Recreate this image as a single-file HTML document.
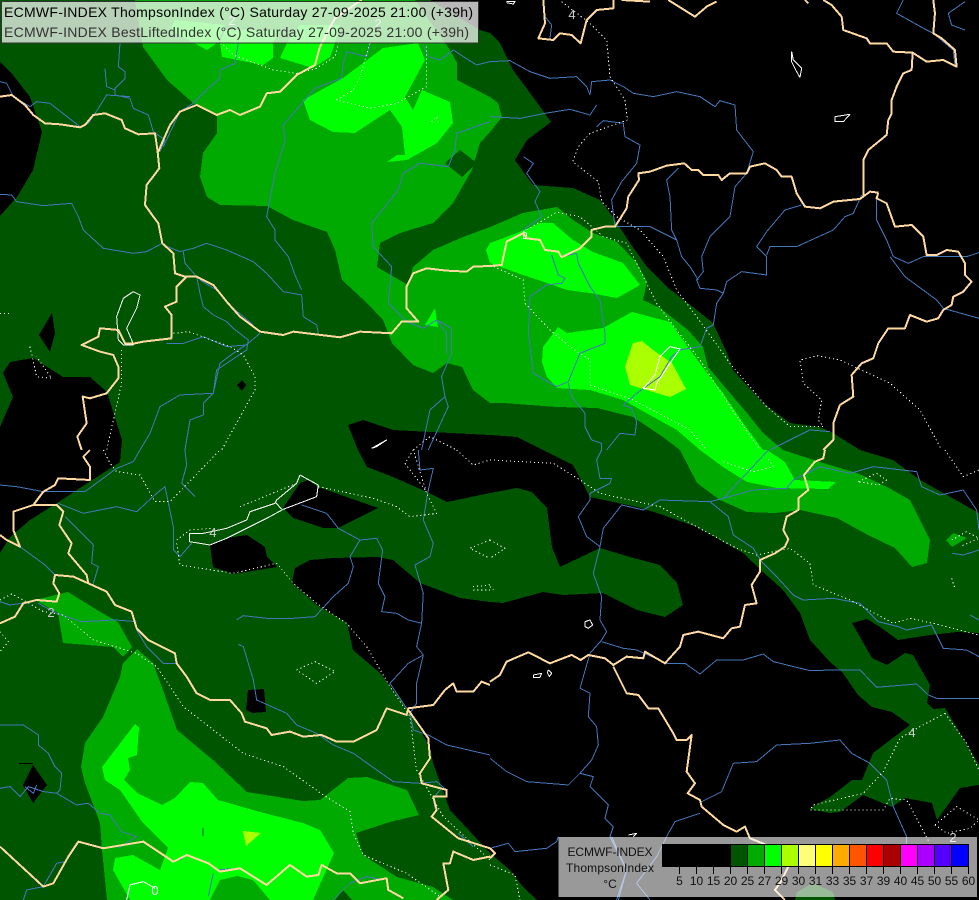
<!DOCTYPE html>
<html><head><meta charset="utf-8"><style>
html,body{margin:0;padding:0;background:#000;width:979px;height:900px;overflow:hidden}
svg{display:block;font-family:"Liberation Sans",sans-serif}
.r polyline,.b polyline,.d polyline,.l polyline{fill:none;vector-effect:non-scaling-stroke;stroke-linejoin:round;shape-rendering:crispEdges}
.r polyline{stroke:#4477bb;stroke-width:1}
.b polyline{stroke:#ffd9a0;stroke-width:2}
.d polyline{stroke:#fff;stroke-width:1;stroke-dasharray:1.2 2.8}
.l polyline{stroke:#fff;stroke-width:1}
</style></head><body>
<svg xmlns="http://www.w3.org/2000/svg" width="979" height="900" viewBox="0 0 979 900">
<rect width="979" height="900" fill="#005500"/>
<g shape-rendering="crispEdges">
<g fill="#000">
<polygon points="430,0 480,30 490,33 500,43 513,70 533,97 551,122 527,140 515,160 527,177 533,185 573,188 600,200 613,217 630,243 647,267 667,287 693,307 713,323 727,353 733,370 763,403 790,423 820,427 833,433 860,450 893,460 920,480 979,513 979,0"/>
<polygon points="348,425 363,420 393,430 490,435 517,437 543,450 573,465 590,497 637,507 657,513 697,527 743,553 763,572 783,590 800,613 810,640 830,662 843,673 858,695 872,707 892,712 910,725 873,753 862,780 852,780 830,797 809,809 830,813 840,812 863,795 892,807 905,798 932,803 937,820 960,788 979,785 979,900 537,900 523,887 510,870 490,853 450,810 433,763 430,747 407,708 380,673 353,650 347,623 317,605 292,583 295,568 310,560 333,558 377,557 393,560 420,583 460,598 490,602 503,603 543,592 563,595 603,593 637,610 665,617 683,605 677,583 660,565 630,557 600,548 560,567 552,547 547,508 532,492 517,488 490,493 447,502 427,492 393,477 367,467 358,450"/>
<polygon points="852,623 867,619 880,627 898,640 930,635 957,632 979,633 979,765 945,708 933,709 927,703 930,685 913,655 905,653 887,665 872,658"/>
<polygon points="0,62 13,75 30,97 42,132 33,170 17,197 0,216"/>
<polygon points="3,373 10,362 33,358 63,377 90,377 107,392 122,440 120,462 57,503 30,520 10,537 0,553 0,427 13,397"/>
<polygon points="52,313 55,333 50,352 39,335"/>
<polygon points="242,380 246,385 242,391 237,385"/>
<polygon points="283,508 300,483 308,480 318,487 378,508 338,528 323,528 293,518"/>
<polygon points="210,545 227,538 247,535 265,547 267,557 277,567 233,574 213,567"/>
<polygon points="248,690 264,689 266,712 253,713 246,710"/>
<polygon points="33,765 47,785 33,803 23,785"/>
<rect x="19" y="763" width="14" height="1"/>
</g>
<polygon fill="#005500" points="797,892 813,883 833,892 835,900 795,900"/>
<g fill="#00aa00">
<polygon points="135,0 415,0 450,50 457,63 457,80 490,97 498,103 502,117 490,132 480,143 472,170 453,203 433,223 400,233 380,243 377,267 408,285 413,267 433,250 463,237 490,227 523,213 557,207 573,220 593,233 617,242 637,263 647,282 643,300 660,308 688,330 703,347 708,367 730,393 747,413 763,433 783,450 823,463 857,473 887,487 910,500 930,540 927,563 912,567 895,548 868,535 837,518 800,510 775,513 747,512 720,500 697,483 680,450 663,437 633,417 597,408 557,407 503,403 490,403 473,390 462,367 447,363 433,373 413,365 392,343 383,320 367,303 342,280 335,250 327,232 293,220 267,206 220,205 207,197 200,177 203,153 217,133 217,115 193,103 167,80 143,47"/>
<polygon points="35,600 68,592 97,610 118,622 132,647 123,657 113,647 63,643 58,613"/>
<polygon points="137,649 153,663 163,690 177,730 213,760 247,792 303,801 320,800 348,778 367,777 407,790 419,815 390,822 356,833 363,855 397,877 433,887 453,900 107,900 102,850 100,823 85,783 81,767 85,743 103,717 120,677 123,663"/>
<polygon points="946,540 953,533 967,538 952,547"/>
</g>
<polygon fill="#005500" points="460,150 477,163 462,177 445,163"/>
<polygon fill="#005500" points="343,890 352,900 335,900"/>
<g fill="#00ff00">
<polygon points="170,30 207,50 217,43 225,25 175,20"/>
<polygon points="220,43 222,57 263,65 273,58 273,43 280,30 225,30"/>
<polygon points="287,43 280,58 313,68 330,57 335,43 340,25 300,25"/>
<polygon points="303,100 343,78 383,48 418,43 425,60 405,97 413,110 422,90 450,102 453,123 437,143 407,160 387,162 397,155 405,155 402,127 390,110 355,133 333,132 310,120"/>
<polygon points="435,308 438,327 425,325"/>
<polygon points="490,243 517,233 540,223 553,223 573,240 593,252 623,263 640,285 617,298 590,293 567,290 547,283 523,275 490,263 486,250"/>
<polygon points="543,347 558,327 567,333 603,328 632,312 670,322 688,347 707,373 723,393 743,423 763,450 767,450 785,462 795,480 836,482 828,489 777,488 747,482 723,467 700,450 677,430 623,400 590,390 557,388 547,377 542,362"/>
<polygon points="135,724 139,728 137,755 128,758 130,770 124,780 137,793 162,805 175,798 190,782 203,783 218,800 260,812 303,823 320,830 334,853 313,900 270,900 253,880 237,876 220,880 210,900 130,900 113,870 115,858 133,855 160,870 168,848 143,823 120,790 105,780 102,767"/>
</g>
<g fill="#aaff00">
<polygon points="633,343 642,341 653,350 672,363 686,389 670,397 653,392 630,385 625,367"/>
<polygon points="243,831 261,833 246,846"/>
</g>
<rect x="202" y="828" width="2" height="8" fill="#00aa00"/>
</g>

<!-- rivers -->
<g class="r">
<g transform="scale(.3333)">
<polyline points="360,130 355,200 375,215 375,235 345,265 345,285 390,295 400,325 445,345 460,395 495,420 480,455"/>
<polyline points="315,205 320,260 345,270"/>
<polyline points="0,245 20,250 40,290 90,320 110,305 150,310 240,380 265,370 295,325 320,285 390,290"/>
<polyline points="0,583 35,585 50,605 130,617 215,610 235,650 250,690 310,745 400,760 440,755 487,730"/>
<polyline points="490,735 540,755 580,745 620,730 680,750 760,785 800,820 850,875 905,885 910,950 950,975 955,1000"/>
<polyline points="550,755 555,790 590,830 600,880 610,920 640,945 680,965 700,985 745,1020 740,1050 650,1110 640,1180 610,1210 610,1245 570,1260 555,1350"/>
<polyline points="780,1000 745,1030 700,1060 660,1090 640,1180 540,1185 480,1220 450,1300 420,1350"/>
<polyline points="500,1030 550,1030 610,1010 680,1040 740,1035"/>
<polyline points="600,840 650,870 700,925 760,975"/>
<polyline points="715,130 705,190 660,210 660,235 625,265 580,310 540,335 490,440"/>
<polyline points="1110,130 1100,170 1040,155 1030,190 1025,235 945,265 850,375 855,420 825,520 800,650 825,690 825,720 865,770 885,825 905,870"/>
<polyline points="1470,365 1370,400 1365,450 1345,500 1260,490 1210,520 1195,570 1115,670 1120,740 1175,800 1165,910 1220,965 1270,985 1310,960 1355,985 1355,1060 1325,1130 1335,1190 1290,1230 1265,1350"/>
<polyline points="1270,135 1285,170 1320,180 1360,150 1390,170 1430,195 1470,185"/>
<polyline points="1310,960 1340,1000 1340,1060"/>
<polyline points="1335,1190 1345,1220 1285,1350"/>
</g>
<g transform="translate(490,0) scale(.3333)">
<polyline points="0,185 60,182 120,215 180,235 260,230 290,260 300,285"/>
<polyline points="0,350 90,355 165,340 240,328 300,345 320,315"/>
<polyline points="300,285 305,245 360,240 400,260 430,280 490,290 560,275 630,290 675,320 690,302 735,315 740,390 790,455 770,520 735,560 720,650 660,710 635,770 640,815 620,840 630,865 680,870 700,880 710,845 755,815 830,825 830,770 800,740 830,695 885,630 935,615"/>
<polyline points="830,765 840,740 920,740 1030,690 1065,650 1090,640 1115,585"/>
<polyline points="320,380 340,362 400,370 405,410 450,435 440,490 395,545 365,600 375,680"/>
<polyline points="375,680 480,680 560,720 575,770 600,800 625,840"/>
<polyline points="100,470 130,490 110,520 150,575 135,605 155,650 100,690"/>
<polyline points="565,505 530,540 540,590 545,690 560,720"/>
<polyline points="185,765 205,825 225,835 215,850 170,855 120,890 115,1000 130,1120 200,1160 235,1145 270,1060 345,1030 345,1000 330,900 300,860 265,790 260,760 215,770"/>
<polyline points="235,1150 245,1190 285,1240 285,1280 305,1320 335,1330 335,1350"/>
<polyline points="350,1350 390,1300 435,1305 440,1265 425,1225 400,1215 440,1180 510,1130 545,1070 570,1050 630,1040 650,985 670,975 680,910 700,880"/>
<polyline points="840,1350 880,1330 960,1290 1020,1295"/>
<polyline points="1160,590 1160,660 1190,720 1210,770 1255,790 1300,770 1430,770 1467,758"/>
<polyline points="1200,770 1245,830 1340,900 1360,925 1467,955"/>
<polyline points="1240,0 1220,40 1310,90 1330,100 1390,150 1395,195"/>
<polyline points="1425,90 1385,75 1375,40 1425,5"/>
<polyline points="160,0 165,50 185,75 180,115"/>
</g>
<g transform="translate(0,450) scale(.3333)">
<polyline points="420,0 400,35 350,55 255,125 130,125 50,110 0,105"/>
<polyline points="175,160 250,190 350,170 410,185 470,130 495,110 520,230 520,300 540,320 575,280"/>
<polyline points="555,0 560,45 545,100 585,140"/>
<polyline points="195,200 280,285 275,340 295,350 280,400"/>
<polyline points="60,290 135,345 165,375"/>
<polyline points="115,460 170,490 245,515 345,510 410,515"/>
<polyline points="0,455 30,465 100,455"/>
<polyline points="410,540 440,590 490,640 530,640"/>
<polyline points="710,510 730,497 800,505 880,505 945,500 1000,440 1045,400 1060,350 1050,320 1080,270 1130,265 1148,300 1135,400 1155,440 1145,485 1190,490 1225,510 1265,520 1250,590 1270,615 1225,640 1170,700 1220,775"/>
<polyline points="905,165 980,190 1015,235 1080,270"/>
<polyline points="1255,0 1260,60 1300,55 1285,120 1270,210 1300,280 1290,320 1245,345 1270,430 1265,520"/>
<polyline points="1270,615 1250,700 1250,760 1230,790 1240,840 1285,855 1340,885 1470,915"/>
<polyline points="715,583 730,590 760,690 770,750 860,790 890,825 950,850 1000,885 1060,910 1130,960 1180,995 1260,1000 1310,995 1340,1020"/>
<polyline points="0,1015 30,1010 60,1040 85,1010 130,1025 170,1030 230,1065 265,1060 300,1090 330,1095 365,1145 410,1160 355,1195"/>
<polyline points="0,825 70,825 115,855 115,885 145,910 165,950 185,970 180,1020 170,1030"/>
<polyline points="75,1010 100,1030 110,1005"/>
<polyline points="70,1350 80,1320 130,1310 170,1240 195,1235"/>
<polyline points="640,1270 625,1340"/>
<polyline points="650,1260 720,1255"/>
<polyline points="1000,1350 1050,1300 1100,1280 1150,1290"/>
<polyline points="540,1230 560,1215"/>
<polyline points="1320,1020 1300,1045 1305,1075"/>
<polyline points="1420,1190 1375,1150"/>
</g>
<g transform="translate(490,450) scale(.3333)">
<polyline points="335,0 320,30 330,85 365,85 360,100 300,130 300,150 265,200 290,260 330,290 310,370 335,440 330,510 350,545 335,570 300,610 270,715 300,730 295,800 320,830 325,885 305,930 270,970 310,980 300,1010 355,1065 345,1105 370,1130 360,1160 410,1260 380,1350"/>
<polyline points="395,165 340,235 330,290"/>
<polyline points="335,575 400,595 440,600 530,640 585,640 630,672 680,630 760,630 820,612 850,635 960,662 1030,660 1110,660 1160,712 1280,702 1315,735 1340,745 1467,745"/>
<polyline points="270,970 235,1005 110,995 50,965 0,925"/>
<polyline points="395,165 460,180 510,150 660,155 700,145 835,0"/>
<polyline points="660,155 715,200 730,255 790,295 815,335 860,380 910,435 940,450 1030,445 1110,460 1165,515 1225,530 1250,540 1325,525 1360,595 1430,600 1467,620"/>
<polyline points="700,145 790,120 890,115 910,90 990,50 1080,70 1150,50 1280,65 1295,110 1350,135 1420,120 1460,180 1467,240"/>
<polyline points="1387,310 1420,315 1467,300"/>
<polyline points="1440,495 1467,510"/>
<polyline points="0,1195 55,1180 75,1205 170,1195 200,1175 205,1160"/>
<polyline points="635,1055 695,1025 730,940 800,935 860,885 960,880 1050,870 1085,910 1140,940 1190,990 1210,1070 1250,1160 1250,1190"/>
<polyline points="630,1090 555,1115 535,1150 500,1220 440,1300 480,1350"/>
<polyline points="365,1160 410,1260 385,1350"/>
</g>
</g>

<!-- dotted contours -->
<g class="d">
<g transform="scale(.3333)">
<polyline points="670,135 700,165 820,210 890,220 950,205 1005,170 1015,130"/>
<polyline points="1110,130 1080,230 1060,270 1010,300 1110,325 1190,310 1280,260 1280,130"/>
<polyline points="520,1000 565,995 620,1015 690,1040 730,1065 765,1130 765,1170 665,1350"/>
<polyline points="365,1050 365,1150 320,1350"/>
<polyline points="90,1040 110,1130 155,1135 110,1070"/>
<polyline points="0,940 30,940"/>
<polyline points="1295,365 1310,350 1315,370"/>
<polyline points="1240,1350 1290,1310 1370,1350"/>
</g>
<g transform="translate(490,0) scale(.3333)">
<polyline points="215,5 300,70 350,120 360,230 405,300 413,360 300,400 265,440 248,485 325,545 335,605 380,650 450,690 520,770 560,870 620,950 720,1090 830,1220 900,1280 1000,1280 985,1260 995,1200 940,1150 930,1080 980,1067 1050,1080 1200,1150 1290,1230 1355,1350"/>
<polyline points="100,695 200,637 270,650 340,710 410,730 460,830 500,910 560,990 630,1080 720,1220 810,1350"/>
<polyline points="0,795 100,840 105,910 180,990 240,1040 300,1080 300,1155 430,1200 600,1290 650,1350"/>
</g>
<g transform="translate(0,450) scale(.3333)">
<polyline points="310,0 330,40 350,65 420,75 465,155 510,155 660,0"/>
<polyline points="530,270 570,240 635,235"/>
<polyline points="720,170 890,100"/>
<polyline points="530,280 540,345 700,370 830,340 880,400 950,460 1040,520 1100,590 1170,710 1230,800 1250,960 1330,1100 1470,1230"/>
<polyline points="955,110 1120,145 1190,170 1230,200 1310,190 1280,130 1240,0 1215,40 1280,125"/>
<polyline points="1370,0 1420,45 1470,30"/>
<polyline points="1470,270 1410,295 1470,325"/>
<polyline points="1470,405 1420,410 1420,420 1470,420"/>
<polyline points="890,660 945,635 1005,665 950,700 890,660"/>
<polyline points="0,450 35,432 70,450 130,485 190,495 280,570 410,610 470,650 550,770 730,910 850,950 970,1035 1050,1085 1060,1150 1090,1215 1220,1270 1320,1340"/>
<polyline points="0,545 25,575 0,605"/>
</g>
<g transform="translate(490,450) scale(.3333)">
<polyline points="0,30 190,40 270,90 330,130 510,170 620,230 740,295 800,315 900,295 960,340 970,405 1080,450 1210,520 1260,505 1330,520 1467,555"/>
<polyline points="700,35 790,65 850,50 830,20"/>
<polyline points="1105,95 1160,70 1190,90 1165,105 1105,95"/>
<polyline points="1365,0 1420,80 1467,60"/>
<polyline points="0,270 45,295 0,325"/>
<polyline points="0,410 10,420"/>
<polyline points="1385,270 1430,245 1467,265 1410,290"/>
<polyline points="1385,385 1395,415 1385,385"/>
<polyline points="1365,790 1290,830 1230,865 1180,965 1120,1030 970,1065 960,1080 1180,1080 1200,1045 1250,1050 1320,1180"/>
<polyline points="1365,790 1430,880 1467,960"/>
<polyline points="1335,1125 1400,1070 1467,1110 1440,1135 1370,1150 1335,1125"/>
<polyline points="0,1245 75,1275 90,1350"/>
</g>
</g>

<!-- lakes -->
<g class="l">
<g transform="scale(.3333)">
<polyline points="400,875 420,885 410,925 380,985 395,1020 400,1035 370,1035 355,1020 350,950 370,895 400,875"/>
<polyline points="1115,1345 1160,1320 1130,1340 1115,1345"/>
</g>
<g transform="translate(490,0) scale(.3333)">
<polyline points="905,155 910,180 935,205 930,232 920,215 905,185 905,155"/>
<polyline points="1035,350 1080,343 1060,365 1035,365 1035,350"/>
<polyline points="50,5 75,5 70,12 50,8"/>
<polyline points="540,1040 570,1047 540,1090 500,1150 495,1170 460,1165 495,1125 510,1070 540,1040"/>
<polyline points="100,695 110,700 110,715 100,715 100,695"/>
</g>
<g transform="translate(0,450) scale(.3333)">
<polyline points="900,75 955,105 950,140 850,178 800,205 680,265 630,285 600,280 568,275 568,250 610,250 680,235 740,210 750,185 825,160 830,150 890,100 900,75"/>
<polyline points="825,155 845,178"/>
<polyline points="380,1350 390,1305 430,1295 465,1315"/>
</g>
<g transform="translate(490,450) scale(.3333)">
<polyline points="285,515 300,510 308,525 295,535 285,530 285,515"/>
<polyline points="130,675 155,670 150,682 130,682 130,675"/>
<polyline points="175,660 185,670 178,680 172,668 175,660"/>
<polyline points="415,1155 440,1150 430,1160"/>
</g>
</g>

<!-- borders -->
<g class="b">
<g transform="scale(.3333)">
<polyline points="0,290 35,285 75,315 100,345 135,370 180,373 240,382 255,375 280,345 315,340 345,352 365,360 375,385 415,403 465,400 473,455 478,505 440,555 435,615 460,650 475,670 487,730 520,760 525,820 555,830 590,830 640,855 680,905 720,950 780,995 850,1005 880,995 1020,1012 1080,995 1175,1000 1205,965 1255,965 1220,925 1220,860 1240,820 1280,805 1340,812 1400,815 1420,800 1470,798"/>
<polyline points="515,1015 515,945 495,920 530,905 530,860 560,830"/>
<polyline points="515,1015 430,1025 405,1030 375,1030 355,990 300,985 295,1010 245,1035 300,1055 340,1065 355,1100 355,1135 320,1180 270,1195 248,1190 260,1270 232,1310 245,1350"/>
<polyline points="1085,0 1005,55 960,140 945,195 890,225 840,275 800,280 780,320 720,345 690,330 650,345 590,315 540,335 510,375 490,420 475,455"/>
</g>
<g transform="translate(490,0) scale(.3333)">
<polyline points="0,798 35,795 50,725 100,700 110,715 150,720 165,750 205,755 215,772 270,745 305,710 305,690 345,680 375,680 410,625 415,590 447,540 445,520 480,515 530,497 583,490 605,510 625,510 640,525 685,525 695,540 720,520 770,520 780,500 825,490 860,510 875,530 905,530 920,580 945,620 990,625 1030,605 1110,597 1140,575 1165,578"/>
<polyline points="1120,590 1120,480 1135,450 1190,405 1195,360 1205,340 1205,300 1220,260 1240,220 1265,210 1268,160"/>
<polyline points="1000,0 1025,15 1055,50 1060,90 1130,115 1140,130 1190,130 1210,155 1268,158 1310,185 1360,180 1400,200 1395,150 1355,115 1330,100 1335,40 1330,0"/>
<polyline points="1165,578 1160,595 1190,610 1215,680 1265,675 1300,710 1310,765 1340,765 1370,750 1405,755 1425,790 1425,825 1445,845 1420,875 1390,890 1385,915 1360,930 1345,955 1310,965 1260,945 1245,985 1195,985 1165,1030 1150,1075 1115,1090 1085,1125 1090,1190 1050,1215 1030,1270 1030,1320 1000,1350"/>
<polyline points="160,0 165,70 145,115 190,120 210,100 245,105 272,130 290,60 320,30 370,25 370,0"/>
<polyline points="535,0 575,25 615,50 650,20 680,5"/>
<polyline points="395,0 480,5"/>
<polyline points="945,0 955,10"/>
</g>
<g transform="translate(0,450) scale(.3333)">
<polyline points="270,0 250,20 270,50 270,90 175,85 165,105 130,125 100,165 40,185 40,240 60,290 20,270 0,255"/>
<polyline points="100,165 170,165 190,185 178,225 215,280 205,310 260,375 265,400 220,380 165,375 160,400 178,430 170,455 110,450 70,460 45,500 0,520"/>
<polyline points="265,400 320,425 345,465 395,485 410,535 445,570 525,610 530,640 560,680 590,730 630,750 690,750 725,790 735,815 800,835 815,855 870,845 910,860 965,855 1010,875 1060,875 1130,840 1160,775 1220,795 1225,775 1300,765 1335,720 1360,700 1370,725 1420,725 1445,695 1470,705"/>
<polyline points="1225,780 1285,865 1290,925 1260,970 1265,1000 1340,1020 1340,1040 1300,1040 1310,1080 1295,1100 1375,1165 1470,1195"/>
<polyline points="0,1190 130,1310 160,1300 205,1220 235,1175 310,1195 430,1175 520,1235 560,1215 625,1240 660,1265 720,1255 800,1305 870,1245 920,1280 955,1275 965,1245 1010,1270 1050,1270 1080,1300 1160,1285 1165,1320 1210,1345"/>
<polyline points="1470,1220 1420,1230 1360,1205 1350,1240 1330,1240 1345,1320 1310,1350"/>
</g>
<g transform="translate(490,450) scale(.3333)">
<polyline points="0,695 30,675 50,635 115,607 180,640 245,615 272,630 295,615 345,625 370,645 410,620 460,625 465,605 525,640 570,590 580,555 625,545 700,565 725,535 750,530 765,465 800,460 785,405 810,365 810,330 855,310 885,290 895,268 880,240 890,200 925,180 925,145 955,120 942,75 975,35 1000,25 1005,0"/>
<polyline points="370,650 410,730 445,735 475,775 505,775 550,850 560,870 590,870 605,855 590,965 615,1000 593,1030 630,1050 635,1070 700,1125 740,1145 765,1130 780,1165 830,1185"/>
<polyline points="895,1250 870,1300 855,1320 885,1350"/>
<polyline points="0,1195 15,1210 0,1225"/>
</g>
</g>

<!-- contour labels -->
<g font-size="13" fill="#ccc" text-anchor="middle">
<text x="572" y="19">4</text>
<text x="232" y="25">2</text>
<text x="378" y="28">2</text>
<text x="51" y="617">2</text>
<text x="213" y="537">4</text>
<text x="155" y="895" fill="#fff">0</text>
<text x="912" y="737">4</text>
<text x="953" y="842">2</text>
</g>

<!-- header -->
<rect x="1.5" y="1.5" width="477" height="41.5" fill="#fff" fill-opacity=".72" stroke="#333" stroke-width="1"/>
<text x="4" y="17" font-size="14" fill="#000" textLength="469" lengthAdjust="spacing">ECMWF-INDEX ThompsonIndex (°C) Saturday 27-09-2025 21:00 (+39h)</text>
<text x="4" y="37" font-size="14" fill="#333" textLength="465" lengthAdjust="spacing">ECMWF-INDEX BestLiftedIndex (°C) Saturday 27-09-2025 21:00 (+39h)</text>

<!-- legend -->
<rect x="558.5" y="837" width="418.5" height="60" fill="#fff" fill-opacity=".6"/>
<g shape-rendering="crispEdges" stroke="#000" stroke-width="1">
<rect x="662.5" y="844.5" width="17" height="22" fill="#000"/>
<rect x="679.5" y="844.5" width="17" height="22" fill="#000"/>
<rect x="696.5" y="844.5" width="17" height="22" fill="#000"/>
<rect x="713.5" y="844.5" width="17" height="22" fill="#000"/>
<rect x="730.5" y="844.5" width="17" height="22" fill="#005500"/>
<rect x="747.5" y="844.5" width="17" height="22" fill="#00aa00"/>
<rect x="764.5" y="844.5" width="17" height="22" fill="#00ff00"/>
<rect x="781.5" y="844.5" width="17" height="22" fill="#aaff00"/>
<rect x="798.5" y="844.5" width="17" height="22" fill="#ffff77"/>
<rect x="815.5" y="844.5" width="17" height="22" fill="#ffff00"/>
<rect x="832.5" y="844.5" width="17" height="22" fill="#ffaa00"/>
<rect x="849.5" y="844.5" width="17" height="22" fill="#ff5500"/>
<rect x="866.5" y="844.5" width="17" height="22" fill="#ff0000"/>
<rect x="883.5" y="844.5" width="17" height="22" fill="#aa0000"/>
<rect x="900.5" y="844.5" width="17" height="22" fill="#ff00ff"/>
<rect x="917.5" y="844.5" width="17" height="22" fill="#aa00ff"/>
<rect x="934.5" y="844.5" width="17" height="22" fill="#5500ff"/>
<rect x="951.5" y="844.5" width="17" height="22" fill="#0000ff"/>
<path fill="none" d="M679.5 867v7M696.5 867v7M713.5 867v7M730.5 867v7M747.5 867v7M764.5 867v7M781.5 867v7M798.5 867v7M815.5 867v7M832.5 867v7M849.5 867v7M866.5 867v7M883.5 867v7M900.5 867v7M917.5 867v7M934.5 867v7M951.5 867v7M968.5 867v7"/>
</g>
<g font-size="12" fill="#111" text-anchor="middle">
<text x="679.5" y="885">5</text><text x="696.5" y="885">10</text><text x="713.5" y="885">15</text><text x="730.5" y="885">20</text><text x="747.5" y="885">25</text><text x="764.5" y="885">27</text><text x="781.5" y="885">29</text><text x="798.5" y="885">30</text><text x="815.5" y="885">31</text><text x="832.5" y="885">33</text><text x="849.5" y="885">35</text><text x="866.5" y="885">37</text><text x="883.5" y="885">39</text><text x="900.5" y="885">40</text><text x="917.5" y="885">45</text><text x="934.5" y="885">50</text><text x="951.5" y="885">55</text><text x="968.5" y="885">60</text>
<text x="610" y="856" textLength="85" lengthAdjust="spacing">ECMWF-INDEX</text>
<text x="610" y="872" textLength="88" lengthAdjust="spacing">ThompsonIndex</text>
<text x="610" y="888">°C</text>
</g>
</svg>
</body></html>
